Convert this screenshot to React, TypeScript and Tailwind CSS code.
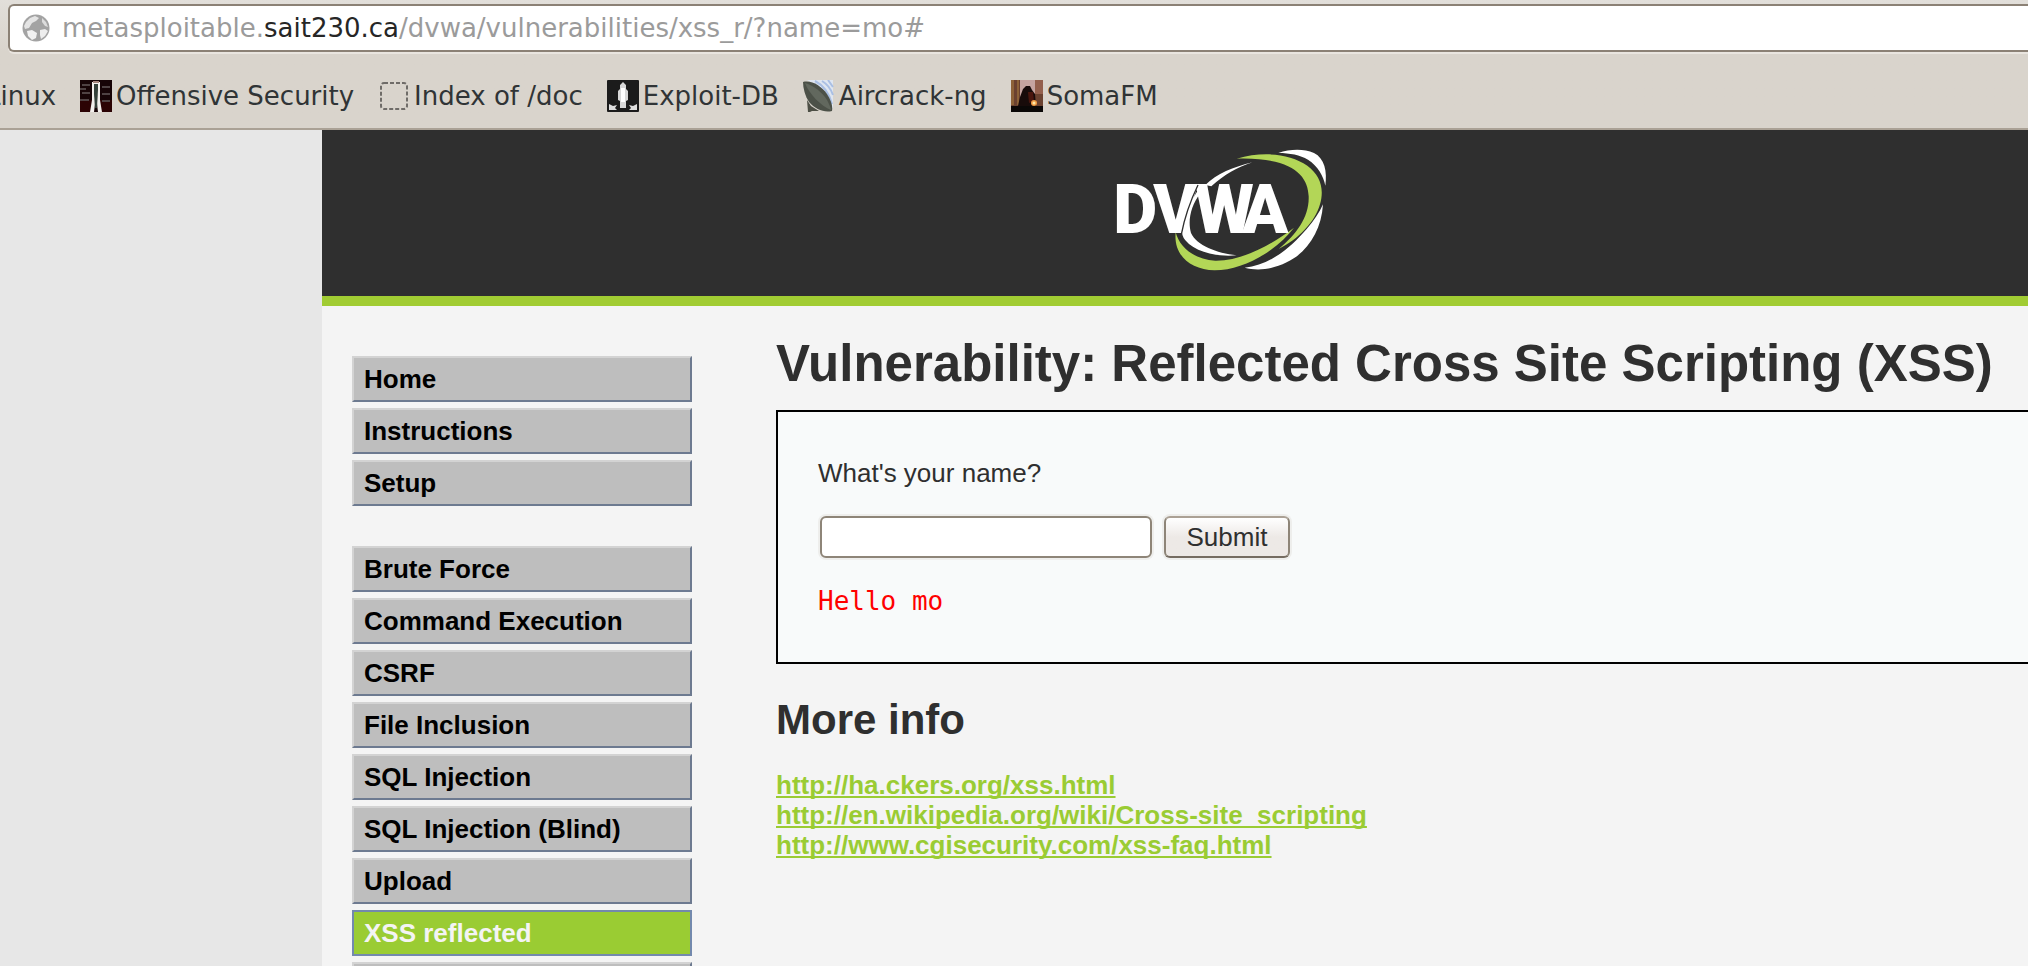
import type { ReactNode } from "react";

function GlobeIcon() {
  return (
    <svg viewBox="0 0 28 28" className="size-7 shrink-0" aria-hidden="true">
      <circle cx="14" cy="14" r="13.5" fill="#a3a3a3" />
      <path d="M4 8l4-4 5-2 4 2-3 3-4 2-3 5-4 1-1-3z" fill="#e4e4e4" />
      <path d="M20 4l4 4 2 5-3-1-3-4z" fill="#dcdcdc" />
      <path d="M5 17l5-1 5 3-1 5-4 2-4-4z" fill="#f2f2f2" />
      <path d="M18 16l5-1 3 2-3 5-4 3-1-4z" fill="#ededed" />
    </svg>
  );
}

function OffensiveIcon() {
  return (
    <svg viewBox="0 0 32 32" className="size-8 shrink-0" aria-hidden="true">
      <rect width="32" height="32" fill="#170406" />
      <path d="M0 20h12v12H0zM20 20h12v12H20z" fill="#2c0304" />
      <path d="M2 4h8v2H2zM0 8h6v2H0zM22 6h8v2h-8zM2 12h8v2H2zM22 13h8v2h-8zM0 19h9v2H0zM22 20h8v2h-8z" fill="#4f4243" />
      <path d="M12 2h8v18l2 12h-4l-1-8h-2l-1 8h-4l2-12z" fill="#f3efec" />
      <path d="M14 4h4v6l-1 18h-2l-1-14z" fill="#35403a" />
      <path d="M13 1h6v2h-6z" fill="#a5847c" />
    </svg>
  );
}

function BlankPageIcon() {
  return (
    <svg viewBox="-2 -2 32 32" className="size-8 shrink-0" aria-hidden="true">
      <rect x="1" y="1" width="26" height="26" rx="3" fill="none" stroke="#6f6c68" strokeWidth="2" strokeDasharray="4 2" />
    </svg>
  );
}

function ExploitIcon() {
  return (
    <svg viewBox="0 0 32 32" className="size-8 shrink-0" aria-hidden="true">
      <rect width="32" height="32" rx="1" fill="#1b1b1b" />
      <path d="M16 2l3 3v4l2 2v9l-2 1v7h-6v-7l-2-1v-9l2-2V5z" fill="#d8d8d8" />
      <path d="M14 8h4v14h-4z" fill="#ffffff" />
      <path d="M2 24l4 2 4-1-2 3 2 2H2zM30 24l-4 2-4-1 2 3-2 2h8z" fill="#dedede" />
    </svg>
  );
}

function DishIcon() {
  return (
    <svg viewBox="0 0 32 32" className="size-8 shrink-0" aria-hidden="true">
      <path d="M4 0h26v30C24 14 16 6 4 0z" fill="#dfe6f0" />
      <path d="M12 1c8 4 14 12 17 23M19 1c5 3 9 8 11 14M25 0l5 7" fill="none" stroke="#a9bfe4" strokeWidth="2" />
      <path d="M4 20l4 6 8 5H9l-2 1H5z" fill="#4d4f45" />
      <path d="M0 2C9 0 18 6 24 14c4 6 6 12 5 17-8 2-17-2-23-9C2 16 0 8 0 2z" fill="#4c5148" />
      <path d="M2 3c8 2 17 9 22 17 2 4 4 8 4 10C18 26 6 14 2 3z" fill="#62685e" />
    </svg>
  );
}

function SomaIcon() {
  return (
    <svg viewBox="0 0 32 32" className="size-8 shrink-0" aria-hidden="true">
      <rect width="32" height="32" fill="#6b4230" />
      <path d="M0 0h3v25H0zM6 0h2v25H6z" fill="#8d6238" />
      <path d="M9 0h15v20H9z" fill="#c6a4a0" />
      <path d="M24 0h8v14h-8z" fill="#94604d" />
      <path d="M12 9l3-3h4l2 4 3 4 1 12H7l2-9z" fill="#180b0a" />
      <path d="M17 12h5l1 9-5 2z" fill="#4a160e" />
      <circle cx="23" cy="23" r="3" fill="#f09a42" />
      <circle cx="23" cy="23" r="1.5" fill="#ffe9a8" />
      <path d="M0 26h32v6H0z" fill="#0b0807" />
    </svg>
  );
}

function DvwaLogo() {
  return (
    <svg viewBox="72 69 642 369" className="h-[123px] w-[214px]" role="img" aria-label="DVWA">
      <path d="M565 84C600 72 640 70 672 84C704 100 712 140 706 182C700 152 684 124 654 104C630 90 600 84 565 84z" fill="#ffffff" />
      <path d="M699 238C694 320 650 384 590 412C548 434 500 438 464 428C540 420 600 370 650 312C672 286 688 264 699 238z" fill="#ffffff" />
      <path d="M440 101C520 78 600 86 652 122C690 150 704 190 690 238C676 290 624 344 566 372C620 326 658 276 656 214C654 150 606 96 440 101z" fill="#b3d657" />
      <path d="M257 322C268 366 312 404 376 407C456 408 544 360 612 308C560 376 462 436 374 436C300 434 250 390 257 322z" fill="#b3d657" />
      <path d="M488 112C430 126 380 146 346 180L364 184C404 148 440 128 488 112z" fill="#ffffff" />
      <path d="M328 190C288 250 258 312 286 346C316 382 380 396 440 391C380 384 320 362 303 324C292 286 304 240 330 206z" fill="#ffffff" />
      <text y="325" x="70 190 314 456" fontFamily="Roboto, sans-serif" fontWeight="900" fontSize="204" fill="#ffffff">
        DVWA
      </text>
      <path d="M324 180C300 230 284 276 274 328" fill="none" stroke="#2f2f2f" strokeWidth="4" />
    </svg>
  );
}

const bookmarks: { label: string; icon: ReactNode }[] = [
  { label: "Offensive Security", icon: <OffensiveIcon /> },
  { label: "Index of /doc", icon: <BlankPageIcon /> },
  { label: "Exploit-DB", icon: <ExploitIcon /> },
  { label: "Aircrack-ng", icon: <DishIcon /> },
  { label: "SomaFM", icon: <SomaIcon /> },
];

const menu = [
  ["Home", "Instructions", "Setup"],
  [
    "Brute Force",
    "Command Execution",
    "CSRF",
    "File Inclusion",
    "SQL Injection",
    "SQL Injection (Blind)",
    "Upload",
    "XSS reflected",
    "XSS stored",
  ],
];

const links = [
  "http://ha.ckers.org/xss.html",
  "http://en.wikipedia.org/wiki/Cross-site_scripting",
  "http://www.cgisecurity.com/xss-faq.html",
];

function BrowserBar() {
  return (
    <div className="overflow-hidden border-b-2 border-[#aaa195] bg-linear-to-b from-[#e2dfda] to-[#d9d4cc] to-40% pt-1 font-['DejaVu_Sans',sans-serif] text-[26px] whitespace-nowrap text-[#303436]">
      <div className="ml-2 flex h-12 items-center gap-3 rounded-l-md border-2 border-r-0 border-[#8b8175] bg-white pl-3 shadow-[0_2px_0_#e9e5df]">
        <GlobeIcon />
        <div role="textbox" aria-label="Address" className="leading-8 text-[#9b9b9b]">
          metasploitable.<span className="text-[#262626]">sait230.ca</span>/dvwa/vulnerabilities/xss_r/?name=mo#
        </div>
      </div>
      <nav aria-label="Bookmarks" className="-ml-3.5 flex h-[76px] items-center gap-6 pt-3">
        <a href="#linux">Linux</a>
        {bookmarks.map((b) => (
          <a key={b.label} href="#bookmark" className="flex items-center gap-1">
            {b.icon}
            {b.label}
          </a>
        ))}
      </nav>
    </div>
  );
}

function Menu() {
  return (
    <nav aria-label="Main menu" className="flex w-[340px] shrink-0 flex-col gap-10 pt-[50px]">
      {menu.map((group) => (
        <ul key={group[0]} className="flex flex-col gap-1.5">
          {group.map((item) => (
            <li key={item}>
              <a
                href="#menu"
                className={
                  item === "XSS reflected"
                    ? "block border-2 border-[#7389ad] bg-[#9acc33] px-2.5 leading-[42px] font-bold text-[#f4f4f4]"
                    : "block border-2 border-t-[#d3d3d3] border-r-[#6d7a90] border-b-[#6d7a90] border-l-[#d3d3d3] bg-[#bebebe] px-2.5 leading-[42px] font-bold text-black"
                }
              >
                {item}
              </a>
            </li>
          ))}
        </ul>
      ))}
    </nav>
  );
}

export default function App() {
  return (
    <div className="h-screen overflow-hidden bg-[#e7e7e7] font-['Liberation_Sans',Arial,sans-serif] text-[26px] text-[#2f2f2f]">
      <BrowserBar />
      <div className="-mr-[92px] ml-[322px] min-h-full bg-[#f4f4f4]">
        <header className="flex h-44 justify-center border-b-10 border-[#a1cc33] bg-[#2f2f2f] pt-[18px]">
          <DvwaLogo />
        </header>
        <div className="flex gap-[84px] pl-[30px]">
          <Menu />
          <main className="grow pt-7">
            <h1 className="text-[51px] leading-[60px] font-bold whitespace-nowrap">
              Vulnerability: Reflected Cross Site Scripting (XSS)
            </h1>
            <section className="mt-4 border-2 border-black bg-[#f8fafa] px-10 py-[46px]">
              <form onSubmit={(e) => e.preventDefault()}>
                <label htmlFor="name" className="block leading-[30px]">
                  What's your name?
                </label>
                <div className="mt-7 flex gap-3 pl-0.5">
                  <input
                    id="name"
                    type="text"
                    className="h-[42px] w-[332px] rounded-md border-2 border-[#8e8578] bg-white px-2 shadow-[0_0_0_2px_#eeeeec]"
                  />
                  <button
                    type="submit"
                    className="h-[42px] w-[126px] rounded-md border-2 border-t-[#aba195] border-r-[#8e8578] border-b-[#756c61] border-l-[#8e8578] bg-linear-to-b from-white to-[#ede9e6] to-50% leading-9 shadow-[0_0_0_2px_#eeeeec]"
                  >
                    Submit
                  </button>
                </div>
              </form>
              <pre className="mt-7 font-['DejaVu_Sans_Mono',monospace] leading-[30px] text-[#ff0000]">Hello mo</pre>
            </section>
            <h2 className="mt-8 text-[42px] leading-[48px] font-bold">More info</h2>
            <ul className="mt-[26px] leading-[30px] font-bold">
              {links.map((l) => (
                <li key={l}>
                  <a href={l} className="text-[#9acc33] underline decoration-2 underline-offset-2 [text-decoration-skip-ink:none]">
                    {l}
                  </a>
                </li>
              ))}
            </ul>
          </main>
        </div>
      </div>
    </div>
  );
}
